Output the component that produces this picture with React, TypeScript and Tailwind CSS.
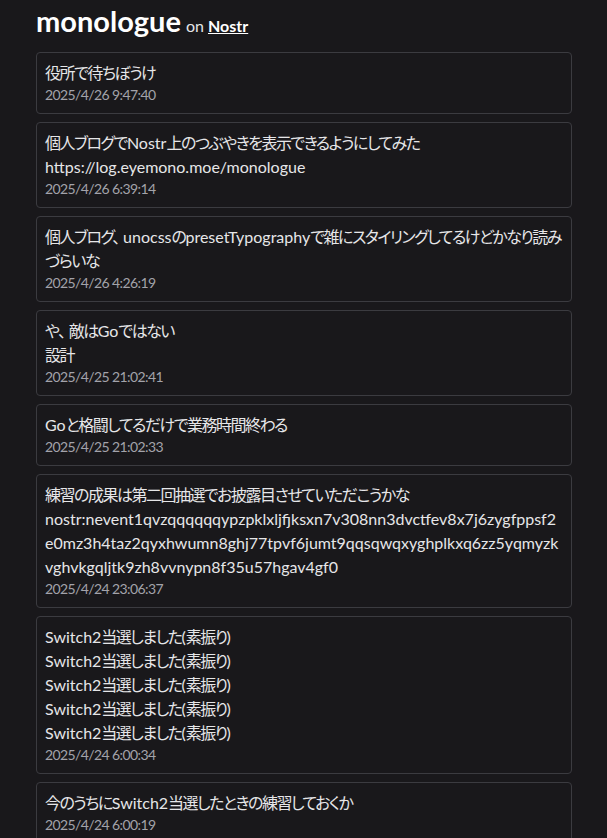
import React from "react";

type Post = { text: string; date: string };

const posts: Post[] = [
  { text: "役所で待ちぼうけ", date: "2025/4/26 9:47:40" },
  {
    text: "個人ブログでNostr上のつぶやきを表示できるようにしてみた\nhttps://log.eyemono.moe/monologue",
    date: "2025/4/26 6:39:14",
  },
  {
    text: "個人ブログ、 unocssのpresetTypographyで雑にスタイリングしてるけどかなり読みづらいな",
    date: "2025/4/26 4:26:19",
  },
  { text: "や、 敵はGoではない\n設計", date: "2025/4/25 21:02:41" },
  { text: "Goと格闘してるだけで業務時間終わる", date: "2025/4/25 21:02:33" },
  {
    text: "練習の成果は第二回抽選でお披露目させていただこうかな\nnostr:nevent1qvzqqqqqqypzpklxljfjksxn7v308nn3dvctfev8x7j6zygfppsf2e0mz3h4taz2qyxhwumn8ghj77tpvf6jumt9qqsqwqxyghplkxq6zz5yqmyzkvghvkgqljtk9zh8vvnypn8f35u57hgav4gf0",
    date: "2025/4/24 23:06:37",
  },
  {
    text: "Switch2当選しました(素振り)\nSwitch2当選しました(素振り)\nSwitch2当選しました(素振り)\nSwitch2当選しました(素振り)\nSwitch2当選しました(素振り)",
    date: "2025/4/24 6:00:34",
  },
  { text: "今のうちにSwitch2当選したときの練習しておくか", date: "2025/4/24 6:00:19" },
];

// CJK runs are set a little tighter so they sit closer to the original UI font
const CJK = /([\u3000-\u30ff\u4e00-\u9fff\uff00-\uffef]+)/;

function Rich({ text }: { text: string }) {
  return (
    <>
      {text.split(CJK).map((part, i) =>
        CJK.test(part) ? (
          <span key={i} className="tracking-[-1.5px]">
            {part}
          </span>
        ) : (
          <span key={i}>{part}</span>
        )
      )}
    </>
  );
}

function PostCard({ post }: { post: Post }) {
  return (
    <li className="border border-[#3b3b40] rounded-[4px] px-2 py-2">
      <p className="text-[16px] leading-6 text-[#e6e6e8] whitespace-pre-wrap break-all">
        <Rich text={post.text} />
      </p>
      <time className="block text-[14px] leading-5 tracking-[-0.6px] text-[#a3a3aa]">{post.date}</time>
    </li>
  );
}

export default function App() {
  return (
    <div
      className="min-h-screen bg-[#19181b] text-[#e6e6e8] pl-[36px] pr-[35px] [font-feature-settings:'palt']"
      style={{ fontFamily: "Lato, 'Noto Sans CJK JP', sans-serif" }}
    >
      <header className="flex items-baseline gap-[5px] pt-[3px] pb-[13px]">
        <h1 className="text-[29px] leading-9 font-bold text-white">monologue</h1>
        <span className="text-[16px] text-[#e6e6e8]">
          on{" "}
          <a href="#" className="font-bold text-white underline">
            Nostr
          </a>
        </span>
      </header>
      <ul className="flex flex-col gap-2 pb-4">
        {posts.map((p) => (
          <PostCard key={p.date} post={p} />
        ))}
      </ul>
    </div>
  );
}
